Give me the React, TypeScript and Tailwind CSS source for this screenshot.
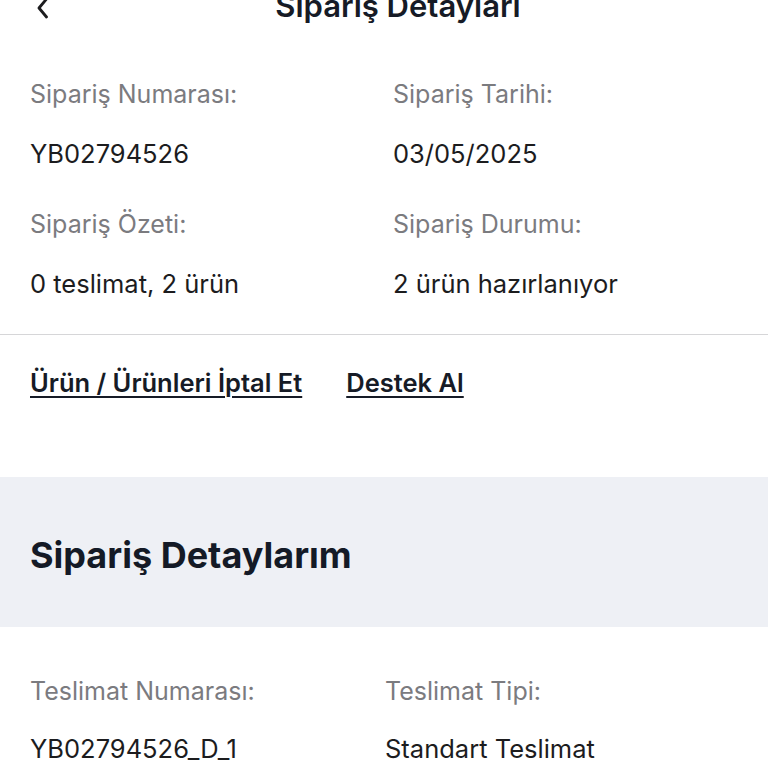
import React from 'react'

const font = { fontFamily: 'Inter, "Noto Sans", sans-serif' }

const Field: React.FC<{ label: string; value: string; gap?: string; className?: string }> = ({
  label,
  value,
  gap = 'mt-[28px]',
  className,
}) => (
  <div className={className}>
    <div className="text-[25px] leading-[32px] text-[#7b7b7f]">{label}</div>
    <div className={`${gap} text-[25.5px] leading-[32px] text-[#1c1c1e]`}>{value}</div>
  </div>
)

const App: React.FC = () => {
  return (
    <div className="h-[768px] w-[768px] overflow-hidden bg-white" style={font}>
      {/* header */}
      <div className="relative -mt-[13px] flex h-[38px] items-center justify-center pl-[28px]">
        <button className="absolute left-[34px] top-[9px] text-[#1c1c1e]">
          <svg width="18" height="24" viewBox="0 0 18 24" fill="none">
            <path d="M12.5 3 L5 12 L12.5 21" stroke="currentColor" strokeWidth="2.8" strokeLinecap="round" strokeLinejoin="round" />
          </svg>
        </button>
        <h1 className="text-[31px] font-semibold leading-[38px] text-[#161b26]">Sipariş Detayları</h1>
      </div>

      {/* order summary */}
      <div className="grid grid-cols-[363px_1fr] px-[30px] pt-[53px]">
        <Field label="Sipariş Numarası:" value="YB02794526" />
        <Field label="Sipariş Tarihi:" value="03/05/2025" />
        <Field className="mt-[38px]" label="Sipariş Özeti:" value="0 teslimat, 2 ürün" />
        <Field className="mt-[38px]" label="Sipariş Durumu:" value="2 ürün hazırlanıyor" />
      </div>

      <div className="mt-[34px] h-px bg-[#d6d6d8]" />

      <div className="flex gap-[44px] px-[30px] pt-[32px]">
        <a className="text-[25.5px] font-semibold leading-[32px] text-[#161b26] underline decoration-[2px] underline-offset-[4px]">
          Ürün / Ürünleri İptal Et
        </a>
        <a className="text-[25.5px] font-semibold leading-[32px] text-[#161b26] underline decoration-[2px] underline-offset-[4px]">
          Destek Al
        </a>
      </div>

      <div className="mt-[78px] h-[150px] bg-[#eef0f5] px-[30px] pt-[56px]">
        <h2 className="text-[36px] font-bold leading-[44px] text-[#141a26]">Sipariş Detaylarım</h2>
      </div>

      <div className="grid grid-cols-[355px_1fr] px-[30px] pt-[48px]">
        <Field gap="mt-[26px]" label="Teslimat Numarası:" value="YB02794526_D_1" />
        <Field gap="mt-[26px]" label="Teslimat Tipi:" value="Standart Teslimat" />
      </div>
    </div>
  )
}

export default App
